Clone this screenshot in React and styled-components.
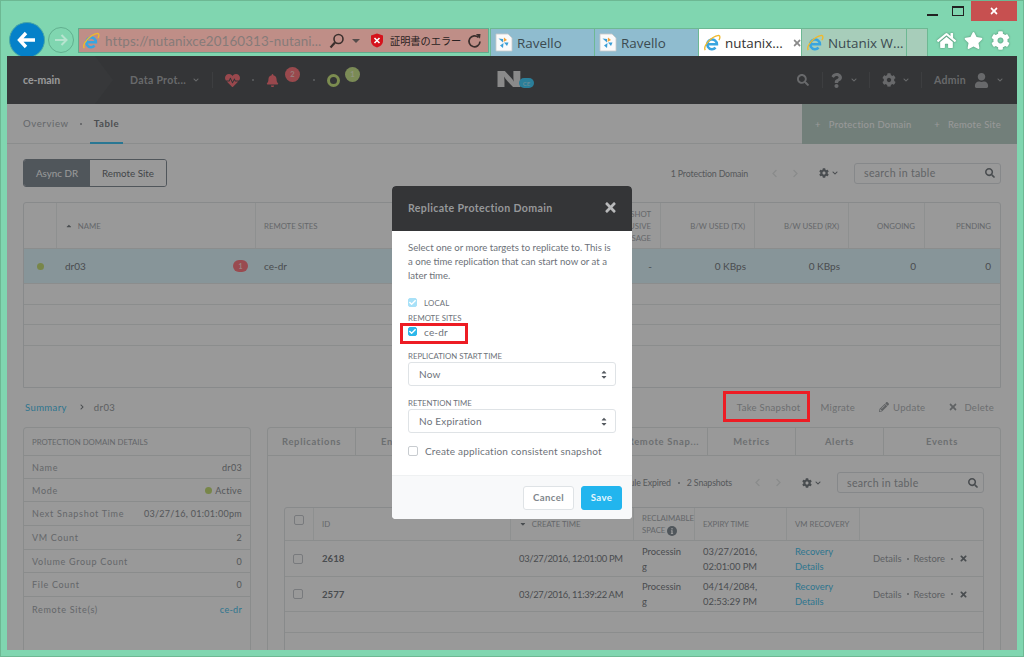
import React from "react"
import styled, { createGlobalStyle } from "styled-components"
import {
  FaHome,
  FaStar,
  FaCog,
  FaHeartbeat,
  FaBell,
  FaSearch,
  FaQuestion,
  FaUser,
  FaPencilAlt,
  FaTimes,
  FaChevronDown,
  FaChevronLeft,
  FaChevronRight,
  FaInfo,
  FaCheck,
  FaCaretUp,
  FaCaretDown,
} from "react-icons/fa"

const GlobalStyle = createGlobalStyle`
  html, body {
    margin: 0;
    padding: 0;
    background: #80d6b0;
    overflow: hidden;
  }
  * {
    box-sizing: border-box;
  }
`

const Window = styled.div`
  width: 1024px;
  height: 657px;
  display: flex;
  flex-direction: column;
  background: #80d6b0;
  border: 1px solid #6db893;
  padding: 0 6px;
  overflow: hidden;
  font-family: Lato, "Noto Sans", sans-serif;
`

/* browser chrome */
const TitleBar = styled.div`
  height: 20px;
  display: flex;
  justify-content: flex-end;
  align-items: flex-start;
  flex: none;
`

const WinButton = styled.div`
  width: ${(p) => p.$w || 26}px;
  height: 20px;
  display: flex;
  align-items: center;
  justify-content: center;
  background: ${(p) => p.$bg || "transparent"};
  color: #fff;
`

const Minimize = styled.div`
  width: 11px;
  height: 2px;
  background: #222;
  margin-top: 7px;
`

const Maximize = styled.div`
  width: 12px;
  height: 10px;
  border: 1px solid #222;
  border-top-width: 2px;
`

const NavBar = styled.div`
  height: 35px;
  flex: none;
  display: flex;
  align-items: flex-start;
  overflow: hidden;
  padding-left: 2px;
`

const BackButton = styled.div`
  width: 36px;
  height: 36px;
  margin-top: 1px;
  border-radius: 50%;
  background: #0581c9;
  border: 1px solid #4aa7a5;
  display: flex;
  align-items: center;
  justify-content: center;
  flex: none;
`

const ForwardButton = styled.div`
  width: 26px;
  height: 26px;
  margin: 6px 4px 0 3px;
  border-radius: 50%;
  border: 1px solid #62b08f;
  display: flex;
  align-items: center;
  justify-content: center;
  flex: none;
`

const AddressBar = styled.div`
  width: 411px;
  height: 25px;
  margin-top: 7px;
  background: #bf8e87;
  border: 1px solid #62ab8c;
  display: flex;
  align-items: center;
  padding: 0 4px 0 3px;
  flex: none;
`

const UrlText = styled.span`
  font-family: Lato, sans-serif;
  font-size: 13.4px;
  letter-spacing: 0.1px;
  color: #867b79;
  margin-left: 5px;
  width: 224px;
  white-space: nowrap;
  overflow: hidden;
  flex: none;
`

const CertText = styled.span`
  font-family: "Noto Sans CJK JP", sans-serif;
  font-size: 10.2px;
  color: #2a2222;
  margin: 0 6px 0 6px;
  white-space: nowrap;
`

const SmallCaret = styled.span`
  width: 0;
  height: 0;
  margin: 0 10px 0 7px;
  border-left: 4px solid transparent;
  border-right: 4px solid transparent;
  border-top: 4px solid #554c4b;
`

const Tabs = styled.div`
  display: flex;
  height: 28px;
  margin-top: 7px;
  margin-left: 1px;
  flex: none;
`

const BrowserTab = styled.div`
  width: ${(p) => p.$w}px;
  display: flex;
  align-items: center;
  gap: 4px;
  padding-left: 4px;
  background: ${(p) => p.$bg};
  border: 1px solid #6db893;
  border-left-width: ${(p) => (p.$first ? 1 : 0)}px;
  border-bottom: none;
  font-family: "Open Sans", sans-serif;
  font-size: 13.4px;
  color: ${(p) => p.$color || "#3b4a50"};
  white-space: nowrap;
  overflow: hidden;
`

const TabClose = styled(FaTimes)`
  margin-left: 6px;
  color: #8a8a8a;
  font-size: 10px;
`

const BrowserTools = styled.div`
  display: flex;
  gap: 8px;
  margin: 10px 0 0 9px;
  color: #fff;
  font-size: 19px;
  filter: drop-shadow(0 0 1px #4f8b70);
`

/* page behind the dialog */
const Page = styled.div`
  height: 594px;
  width: 1010px;
  flex: none;
  position: relative;
  background: #fff;
  display: flex;
  flex-direction: column;
  overflow: hidden;
`

const AppHeader = styled.div`
  height: 48px;
  flex: none;
  background: #57595c;
  display: flex;
  align-items: center;
  color: #aeb0b3;
  position: relative;
`

const ClusterCrumb = styled.div`
  width: 106px;
  height: 48px;
  padding-left: 16px;
  background: #5c5e61;
  clip-path: polygon(0 0, 88px 0, 106px 24px, 88px 48px, 0 48px);
  display: flex;
  align-items: center;
  font-size: 10.5px;
  font-weight: 700;
  color: #fff;
  flex: none;
`

const HeaderItem = styled.div`
  display: flex;
  align-items: center;
  font-size: 10.5px;
  font-weight: 700;
  letter-spacing: 0.3px;
  margin-left: ${(p) => p.$ml || 0}px;
  gap: ${(p) => p.$gap || 6}px;
  position: relative;
  white-space: nowrap;
`

const RedIcon = styled.span`
  color: #ff7880;
  display: flex;
  font-size: ${(p) => p.$size}px;
`

const Ring = styled.span`
  width: 13px;
  height: 13px;
  border-radius: 50%;
  border: 3px solid #cfea85;
`

const Dot = styled.span`
  width: 2px;
  height: 2px;
  border-radius: 50%;
  background: ${(p) => p.$color || "#9ca0a3"};
  margin: 0 ${(p) => p.$gap || 0}px 0 ${(p) => p.$left ?? (p.$gap || 0)}px;
  flex: none;
`

const CountBadge = styled.span`
  width: 15px;
  height: 15px;
  border-radius: 50%;
  background: ${(p) => p.$bg};
  color: ${(p) => p.$color};
  font-size: 7.5px;
  font-weight: 700;
  display: flex;
  align-items: center;
  justify-content: center;
  position: absolute;
  top: -7px;
  left: ${(p) => p.$left}px;
`

const LogoWrap = styled.div`
  position: absolute;
  left: 489px;
  top: 15px;
  display: flex;
  width: 41px;
  height: 20px;
`

const LogoN = styled.span`
  font-family: Inter, sans-serif;
  font-weight: 900;
  font-size: 21px;
  line-height: 18px;
  color: #e6e6e6;
  transform: scaleX(1.6);
  transform-origin: left center;
`

const LogoCe = styled.span`
  position: absolute;
  left: 23px;
  top: 7px;
  width: 15px;
  height: 10px;
  border-radius: 5px;
  background: #46d2ff;
  color: #a8e6fa;
  font-size: 6px;
  font-weight: 700;
  display: flex;
  align-items: center;
  justify-content: center;
`

const HeaderRight = styled.div`
  margin-left: auto;
  display: flex;
  align-items: center;
  padding-right: 14px;
`

const HeaderSep = styled.span`
  width: 1px;
  height: 16px;
  background: #66686b;
  margin: 0 ${(p) => p.$right ?? 12}px 0 ${(p) => p.$gap ?? 12}px;
`

const SubNav = styled.div`
  height: 40px;
  flex: none;
  display: flex;
  align-items: stretch;
  border-bottom: 1px solid #e8ecec;
  padding-left: 16px;
`

const SubTab = styled.div`
  display: flex;
  align-items: center;
  font-size: 9.6px;
  font-weight: ${(p) => (p.$active ? 700 : 400)};
  letter-spacing: 0.6px;
  color: ${(p) => (p.$active ? "#7f8488" : "#a8acb0")};
  padding: 0 ${(p) => (p.$active ? 4 : 0)}px;
  margin-bottom: -1px;
  border-bottom: 2px solid ${(p) => (p.$active ? "#45c6f5" : "transparent")};
`

const SubDot = styled.span`
  align-self: center;
  width: 2px;
  height: 2px;
  background: #9a9da0;
  border-radius: 50%;
  margin: 0 8px 0 11px;
`

const ActionBlock = styled.div`
  margin-left: auto;
  width: 215px;
  background: #bed4cb;
  margin-bottom: -1px;
  display: flex;
  align-items: center;
  justify-content: space-between;
  padding: 0 16px 0 13px;
  font-size: 9.4px;
  color: #fff;
  letter-spacing: 0.3px;
`

const Section = styled.div`
  padding: 15px 16px 0;
  display: flex;
  flex-direction: column;
  flex: 1;
  min-height: 0;
`

const Toolbar = styled.div`
  display: flex;
  align-items: center;
  justify-content: space-between;
  height: 28px;
  flex: none;
  margin-bottom: 15px;
`

const Segmented = styled.div`
  display: flex;
  width: 144px;
  height: 28px;
  border: 1px solid #868f98;
  border-radius: 3px;
  overflow: hidden;
`

const Segment = styled.div`
  flex: ${(p) => (p.$active ? "0 0 66px" : 1)};
  display: flex;
  align-items: center;
  justify-content: center;
  background: ${(p) => (p.$active ? "#858f98" : "#fff")};
  color: ${(p) => (p.$active ? "#fff" : "#70757a")};
  font-size: 9.8px;
`

const TableTools = styled.div`
  display: flex;
  align-items: center;
  color: #b0b4b8;
  font-size: 8.8px;
`

const ToolCount = styled.span`
  color: #8f9397;
  white-space: nowrap;
  letter-spacing: -0.15px;
`

const PagerIcons = styled.span`
  display: flex;
  gap: 12px;
  color: #e6e9e9;
  font-size: 9px;
  margin: 0 19px 0 ${(p) => p.$left}px;
`

const GearDrop = styled.span`
  display: flex;
  align-items: center;
  gap: 3px;
  color: #7b8085;
  font-size: 10px;
  margin-right: 16px;
`

const SearchBox = styled.div`
  width: 147px;
  height: 21px;
  border: 1px solid #dfe3e6;
  border-radius: 3px;
  background: #fff;
  display: flex;
  align-items: center;
  justify-content: space-between;
  padding: 0 5px 0 9px;
  font-size: 10.6px;
  letter-spacing: 0.3px;
  color: #a3a7ab;
  svg {
    color: #7b8085;
    font-size: 10px;
  }
`

const DataTable = styled.div`
  border: 1px solid #e3e6e8;
  border-radius: 3px 3px 0 0;
  flex: none;
  height: ${(p) => (p.$h ? `${p.$h}px` : "auto")};
`

const TableRow = styled.div`
  display: grid;
  grid-template-columns: ${(p) => p.$cols};
  height: ${(p) => p.$h}px;
  background: ${(p) => p.$bg || "transparent"};
  border-bottom: 1px solid #e8ebec;
  &:last-child {
    border-bottom: none;
  }
`

const HeadCell = styled.div`
  display: flex;
  align-items: center;
  justify-content: ${(p) => (p.$right ? "flex-end" : "flex-start")};
  text-align: ${(p) => (p.$right ? "right" : "left")};
  padding: 0 ${(p) => (p.$right ? 9 : 8)}px;
  font-size: 7.8px;
  line-height: 12px;
  color: #a8acb0;
  border-right: 1px solid #edf0f1;
  gap: 5px;
  &:last-child {
    border-right: none;
  }
`

const CheckHead = styled(HeadCell)`
  padding: 7px 0 0 9px;
  align-items: flex-start;
`

const SortCaret = styled.span`
  display: flex;
  color: #7b8085;
`

const Cell = styled.div`
  display: flex;
  align-items: center;
  justify-content: ${(p) => (p.$right ? "flex-end" : p.$center ? "center" : "flex-start")};
  padding: 0 ${(p) => (p.$right ? 9 : 8)}px;
  font-size: ${(p) => p.$size || 10}px;
  font-weight: ${(p) => p.$weight || 400};
  line-height: 15px;
  color: #7b8085;
`

const DateCell = styled(Cell)`
  letter-spacing: -0.3px;
  white-space: nowrap;
`

const WrapCell = styled(Cell)`
  word-break: break-all;
  padding-right: 10px;
`

const ActionsCell = styled(Cell)`
  padding-left: 13px;
`

const Status = styled.span`
  width: 7px;
  height: 7px;
  border-radius: 50%;
  background: #c8e07a;
  flex: none;
`

const AlertPill = styled.span`
  width: 15px;
  height: 12px;
  border-radius: 6px;
  background: #ff7d85;
  color: #ffdcdc;
  font-size: 7px;
  font-weight: 700;
  margin-left: auto;
  display: flex;
  align-items: center;
  justify-content: center;
`

const DetailBar = styled.div`
  height: 28px;
  flex: none;
  margin: 5px 0 6px;
  display: flex;
  align-items: center;
  font-size: 9.5px;
  letter-spacing: 0.4px;
  color: #9a9ea2;
`

const Crumb = styled.span`
  color: ${(p) => p.$color || "inherit"};
  margin-left: ${(p) => p.$ml || 0}px;
  display: flex;
  svg {
    font-size: 6px;
  }
`

const DetailActions = styled.div`
  margin-left: auto;
  display: flex;
  align-items: center;
  padding-right: 7px;
  color: #b5b8bb;
  letter-spacing: 0.3px;
`

const DetailAction = styled.span`
  display: flex;
  align-items: center;
  gap: ${(p) => p.$gap || 0}px;
  margin-left: ${(p) => p.$ml || 0}px;
  svg {
    color: #a0a4a7;
    font-size: 10px;
  }
`

const Panels = styled.div`
  display: flex;
  gap: 16px;
  flex: 1;
  min-height: 0;
`

const Panel = styled.div`
  width: ${(p) => p.$w}px;
  flex: none;
  border: 1px solid #e6e9ea;
  border-bottom: none;
  border-radius: 4px 4px 0 0;
  height: 240px;
`

const PanelTitle = styled.div`
  height: 28px;
  display: flex;
  align-items: center;
  padding: 0 8px;
  font-size: 7.8px;
  color: #a8acb0;
  border-bottom: 1px solid #e6e9ea;
`

const DetailRow = styled.div`
  height: ${(p) => p.$h}px;
  display: flex;
  align-items: center;
  justify-content: space-between;
  padding: 0 8px;
  font-size: 9px;
  letter-spacing: 0.7px;
  color: #a8acb0;
  border-bottom: 1px solid #e6e9ea;
  &:last-child {
    border-bottom: none;
  }
`

const DetailValue = styled.span`
  color: ${(p) => p.$color || "#8d9195"};
  display: flex;
  align-items: center;
  gap: 3px;
  letter-spacing: 0.3px;
`

const PanelTabs = styled.div`
  display: flex;
  height: 28px;
  border-bottom: 1px solid #e6e9ea;
`

const PanelTab = styled.div`
  width: ${(p) => p.$w || 88}px;
  flex: none;
  display: flex;
  align-items: center;
  justify-content: center;
  font-size: 9.4px;
  font-weight: 700;
  letter-spacing: 0.7px;
  color: #b5b9bc;
  border-right: 1px solid #e6e9ea;
  white-space: nowrap;
  &:last-child {
    border-right: none;
  }
`

const PanelBody = styled.div`
  padding: 16px 16px 0;
`

const SnapshotTools = styled.div`
  display: flex;
  justify-content: flex-end;
  height: 21px;
  margin-bottom: 14px;
`

const Square = styled.span`
  width: ${(p) => p.$size || 10}px;
  height: ${(p) => p.$size || 10}px;
  border: 1px solid ${(p) => p.$line || "#c8ccd0"};
  border-radius: 2px;
  background: ${(p) => p.$bg || "#fff"};
  display: flex;
  align-items: center;
  justify-content: center;
  color: #fff;
  font-size: 7px;
  flex: none;
`

const InfoMark = styled.span`
  width: 10px;
  height: 10px;
  border-radius: 50%;
  background: #858f98;
  color: #fff;
  font-size: 6px;
  display: inline-flex;
  align-items: center;
  justify-content: center;
  vertical-align: -1px;
`

const CellLink = styled.span`
  color: #4ec5ef;
`

const RowActions = styled.span`
  display: flex;
  align-items: center;
  font-size: 9.4px;
  color: #9ea2a6;
  white-space: nowrap;
  svg {
    color: #7b8085;
    font-size: 9px;
  }
`

/* dialog */
const Overlay = styled.div`
  position: absolute;
  inset: 0;
  background: rgba(0, 0, 0, 0.4);
  display: flex;
  justify-content: center;
  padding-top: 130px;
`

const Modal = styled.div`
  width: 240px;
  height: 333px;
  background: #fff;
  border-radius: 4px;
  overflow: hidden;
  display: flex;
  flex-direction: column;
  position: relative;
`

const ModalHeader = styled.div`
  height: 45px;
  flex: none;
  background: #343537;
  display: flex;
  align-items: center;
  justify-content: space-between;
  padding: 0 14px 2px 16px;
  font-size: 10.6px;
  font-weight: 700;
  letter-spacing: 0.35px;
  color: #96989a;
  svg {
    color: #b8b9ba;
    font-size: 15px;
  }
`

const ModalBody = styled.div`
  flex: 1;
  padding: 10px 16px 0;
`

const Intro = styled.p`
  margin: 0;
  font-size: 9.6px;
  line-height: 14px;
  color: #6d7279;
  height: 54px;
`

const CheckRow = styled.div`
  display: flex;
  align-items: center;
  gap: 7px;
  height: 11px;
  margin-top: ${(p) => p.$mt || 0}px;
  font-size: ${(p) => p.$size || 10}px;
  letter-spacing: 0.2px;
  color: #6d7279;
`

const FieldLabel = styled.div`
  font-size: 7.8px;
  line-height: 10px;
  color: #6d7279;
  margin: ${(p) => p.$m || "0"};
`

const SelectBox = styled.div`
  height: 24px;
  width: 208px;
  border: 1px solid #dfe3e6;
  border-radius: 3px;
  margin-top: 1px;
  display: flex;
  align-items: center;
  justify-content: space-between;
  padding: 0 7px 0 10px;
  font-size: 10px;
  letter-spacing: 0.2px;
  color: #6d7279;
`

const SelectArrows = styled.span`
  display: flex;
  flex-direction: column;
  font-size: 8px;
  line-height: 0;
  color: #555a60;
  svg {
    margin: -1.5px 0;
  }
`

const ModalFooter = styled.div`
  height: 44px;
  flex: none;
  background: #f8f9fa;
  border-top: 1px solid #eff1f2;
  display: flex;
  justify-content: flex-end;
  align-items: center;
  gap: 7px;
  padding: 0 10px;
`

const FooterButton = styled.div`
  height: 24px;
  width: ${(p) => p.$w}px;
  border-radius: 3px;
  border: 1px solid ${(p) => (p.$primary ? "#22b5ee" : "#dfe3e6")};
  background: ${(p) => (p.$primary ? "#22b5ee" : "#fff")};
  color: ${(p) => (p.$primary ? "#e6f7fe" : "#81868c")};
  font-size: 9.6px;
  font-weight: 700;
  letter-spacing: 0.4px;
  display: flex;
  align-items: center;
  justify-content: center;
`

const RedMark = styled.div`
  position: absolute;
  left: ${(p) => p.$x}px;
  top: ${(p) => p.$y}px;
  width: ${(p) => p.$w}px;
  height: ${(p) => p.$h}px;
  border: 3px solid #ed1c24;
`

const IeIcon = () => (
  <svg width="18" height="18" viewBox="0 0 20 20" style={{ flex: "none" }}>
    <path
      d="M5 11.500h10.500A5.400 5.400 0 1 0 14 15.200"
      fill="none"
      stroke="#39a5e0"
      strokeWidth="2.800"
    />
    <path
      d="M2.500 18C0 14 8 3 17.500 1.500c1.800.5 1.500 3 .2 5.500"
      fill="none"
      stroke="#f0b92c"
      strokeWidth="1.500"
    />
  </svg>
)

const RavelloIcon = () => (
  <svg width="18" height="19" viewBox="0 0 18 19" style={{ flex: "none" }}>
    <path d="M1 1h12l4 4v13H1z" fill="#fbfbfb" stroke="#c9c9c9" strokeWidth="0.800" />
    <path d="M8 9.500 3.500 5.500l4.500.5z" fill="#3b9ed6" />
    <path d="M8.500 9 9 4.500l3 2.500z" fill="#f0a23a" />
    <path d="M9 9.500l4.500 0-1.500 3.500z" fill="#3b9ed6" />
    <path d="M8.500 10l-.5 5-3-2.500z" fill="#3b9ed6" />
  </svg>
)

const BrowserLens = () => (
  <svg width="16" height="16" viewBox="0 0 16 16" style={{ flex: "none" }}>
    <circle cx="9.500" cy="6" r="4.500" fill="none" stroke="#3b2f2d" strokeWidth="1.600" />
    <path d="M6 9.500 1.500 14.500" stroke="#3b2f2d" strokeWidth="2.200" />
  </svg>
)

const CertShield = () => (
  <svg width="14" height="15" viewBox="0 0 14 15" style={{ flex: "none" }}>
    <path d="M7 .5 13 2.500V8c0 3.500-3 5.500-6 6.500C4 13.500 1 11.500 1 8V2.500z" fill="#d5121c" />
    <path d="M4.500 5 9.500 10M9.500 5 4.500 10" stroke="#fff" strokeWidth="1.600" />
  </svg>
)

const RefreshIcon = () => (
  <svg width="15" height="16" viewBox="0 0 15 16" style={{ flex: "none" }}>
    <path d="M11.500 4.500A5.500 5.500 0 1 0 13 8.500" fill="none" stroke="#3b2f2d" strokeWidth="1.700" />
    <path d="M9 1 13.500 1 13 5.800z" fill="#3b2f2d" />
  </svg>
)

const TopCols = "33px 199px 325px 80px 94px 94px 76px 75px"
const SnapCols = "29px 197px 123px 61px 92px 73px 123px"

const details = [
  ["Name", "dr03", 23],
  ["Mode", "Active", 23],
  ["Next Snapshot Time", "03/27/16, 01:01:00pm", 24],
  ["VM Count", "2", 24],
  ["Volume Group Count", "0", 23],
  ["File Count", "0", 24],
  ["Remote Site(s)", "ce-dr", 24],
]

const snapshots = [
  ["2618", "03/27/2016, 12:01:00 PM", "03/27/2016, 02:01:00 PM", 36],
  ["2577", "03/27/2016, 11:39:22 AM", "04/14/2084, 02:53:29 PM", 35],
]

const ChevDown = () => <FaChevronDown style={{ fontSize: 6, flex: "none" }} />

const SearchTools = () => (
  <>
    <GearDrop>
      <FaCog />
      <ChevDown />
    </GearDrop>
    <SearchBox>
      search in table
      <FaSearch />
    </SearchBox>
  </>
)

const App = () => {
  return (
    <Window>
      <GlobalStyle />
      <TitleBar>
        <WinButton>
          <Minimize />
        </WinButton>
        <WinButton>
          <Maximize />
        </WinButton>
        <WinButton $w={46} $bg="#c75050">
          <FaTimes style={{ fontSize: 10 }} />
        </WinButton>
      </TitleBar>

      <NavBar>
        <BackButton>
          <svg width="20" height="18" viewBox="0 0 20 18">
            <path d="M9 2 2.500 9 9 16M3 9h15" fill="none" stroke="#fff" strokeWidth="3.400" />
          </svg>
        </BackButton>
        <ForwardButton>
          <svg width="14" height="12" viewBox="0 0 14 12">
            <path d="M7.500 1 12.500 6 7.500 11M12 6H1" fill="none" stroke="#b6e4cf" strokeWidth="2" />
          </svg>
        </ForwardButton>
        <AddressBar>
          <IeIcon />
          <UrlText>https://nutanixce20160313-nutani...</UrlText>
          <BrowserLens />
          <SmallCaret />
          <CertShield />
          <CertText>証明書のエラー</CertText>
          <RefreshIcon />
        </AddressBar>
        <Tabs>
          <BrowserTab $w={105} $bg="#8fbccf" $first>
            <RavelloIcon />
            Ravello
          </BrowserTab>
          <BrowserTab $w={104} $bg="#8fbccf">
            <RavelloIcon />
            Ravello
          </BrowserTab>
          <BrowserTab $w={103} $bg="#fff" $color="#333">
            <IeIcon />
            nutanix...
            <TabClose />
          </BrowserTab>
          <BrowserTab $w={105} $bg="#a7cdba">
            <IeIcon />
            Nutanix W...
          </BrowserTab>
          <BrowserTab $w={21} $bg="#a7cdba" />
        </Tabs>
        <BrowserTools>
          <FaHome />
          <FaStar />
          <FaCog />
        </BrowserTools>
      </NavBar>

      <Page>
        <AppHeader>
          <ClusterCrumb>ce-main</ClusterCrumb>
          <HeaderItem $ml={17} $gap={7}>
            Data Prot...
            <ChevDown />
          </HeaderItem>
          <HeaderSep $gap={13} />
          <RedIcon $size={15}>
            <FaHeartbeat />
          </RedIcon>
          <Dot $gap={12} />
          <HeaderItem>
            <RedIcon $size={13}>
              <FaBell />
            </RedIcon>
            <CountBadge $left={19} $bg="#ff7b80" $color="#ffd0d2">
              2
            </CountBadge>
          </HeaderItem>
          <Dot $left={34} $gap={12} />
          <HeaderItem>
            <Ring />
            <CountBadge $left={18} $bg="#cde890" $color="#eef8d5">
              1
            </CountBadge>
          </HeaderItem>
          <LogoWrap>
            <LogoN>N</LogoN>
            <LogoCe>CE</LogoCe>
          </LogoWrap>
          <HeaderRight>
            <FaSearch style={{ fontSize: 12 }} />
            <HeaderSep $gap={13} $right={6} />
            <FaQuestion style={{ fontSize: 15, marginRight: 7 }} />
            <ChevDown />
            <HeaderSep />
            <FaCog style={{ fontSize: 14, marginRight: 7 }} />
            <ChevDown />
            <HeaderSep />
            <HeaderItem $gap={8}>
              Admin
              <FaUser style={{ fontSize: 15 }} />
              <ChevDown />
            </HeaderItem>
          </HeaderRight>
        </AppHeader>

        <SubNav>
          <SubTab>Overview</SubTab>
          <SubDot />
          <SubTab $active>Table</SubTab>
          <ActionBlock>
            <span>+ &nbsp;&nbsp;Protection Domain</span>
            <span>+ &nbsp;&nbsp;Remote Site</span>
          </ActionBlock>
        </SubNav>

        <Section>
          <Toolbar>
            <Segmented>
              <Segment $active>Async DR</Segment>
              <Segment>Remote Site</Segment>
            </Segmented>
            <TableTools>
              <ToolCount>1 Protection Domain</ToolCount>
              <PagerIcons $left={22}>
                <FaChevronLeft />
                <FaChevronRight />
              </PagerIcons>
              <SearchTools />
            </TableTools>
          </Toolbar>

          <DataTable $h={186}>
            <TableRow $cols={TopCols} $h={46}>
              <HeadCell />
              <HeadCell>
                <SortCaret>
                  <FaCaretUp />
                </SortCaret>
                NAME
              </HeadCell>
              <HeadCell>REMOTE SITES</HeadCell>
              <HeadCell $right>SNAPSHOT EXCLUSIVE USAGE</HeadCell>
              <HeadCell $right>B/W USED (TX)</HeadCell>
              <HeadCell $right>B/W USED (RX)</HeadCell>
              <HeadCell $right>ONGOING</HeadCell>
              <HeadCell $right>PENDING</HeadCell>
            </TableRow>
            <TableRow $cols={TopCols} $h={35} $bg="#e2f8ff">
              <Cell $center>
                <Status />
              </Cell>
              <Cell>
                dr03
                <AlertPill>1</AlertPill>
              </Cell>
              <Cell>ce-dr</Cell>
              <Cell $right>-</Cell>
              <Cell $right>0 KBps</Cell>
              <Cell $right>0 KBps</Cell>
              <Cell $right>0</Cell>
              <Cell $right>0</Cell>
            </TableRow>
            {[21, 20, 21, 21].map((h, i) => (
              <TableRow key={i} $cols={TopCols} $h={h} />
            ))}
          </DataTable>

          <DetailBar>
            <Crumb $color="#4ec5ef" $ml={2}>
              Summary
            </Crumb>
            <Crumb $ml={12} $color="#7b8085">
              <FaChevronRight />
            </Crumb>
            <Crumb $ml={9}>dr03</Crumb>
            <DetailActions>
              <DetailAction>Take Snapshot</DetailAction>
              <DetailAction $ml={20}>Migrate</DetailAction>
              <DetailAction $ml={24} $gap={4}>
                <FaPencilAlt />
                Update
              </DetailAction>
              <DetailAction $ml={23} $gap={6}>
                <FaTimes />
                Delete
              </DetailAction>
            </DetailActions>
          </DetailBar>

          <Panels>
            <Panel $w={228}>
              <PanelTitle>PROTECTION DOMAIN DETAILS</PanelTitle>
              {details.map(([label, value, h]) => (
                <DetailRow key={label} $h={h}>
                  {label}
                  <DetailValue $color={label === "Remote Site(s)" ? "#4ec5ef" : undefined}>
                    {label === "Mode" && <Status />}
                    {value}
                  </DetailValue>
                </DetailRow>
              ))}
            </Panel>
            <Panel $w={734}>
              <PanelTabs>
                <PanelTab>Replications</PanelTab>
                <PanelTab>Entities</PanelTab>
                <PanelTab />
                <PanelTab />
                <PanelTab>Remote Snap...</PanelTab>
                <PanelTab>Metrics</PanelTab>
                <PanelTab>Alerts</PanelTab>
                <PanelTab $w={116}>Events</PanelTab>
              </PanelTabs>
              <PanelBody>
                <SnapshotTools>
                  <TableTools>
                    <ToolCount>Schedule Expired</ToolCount>
                    <Dot $gap={7} />
                    <ToolCount>2 Snapshots</ToolCount>
                    <PagerIcons $left={21}>
                      <FaChevronLeft />
                      <FaChevronRight />
                    </PagerIcons>
                    <SearchTools />
                  </TableTools>
                </SnapshotTools>
                <DataTable>
                  <TableRow $cols={SnapCols} $h={33}>
                    <CheckHead>
                      <Square />
                    </CheckHead>
                    <HeadCell>ID</HeadCell>
                    <HeadCell>
                      <SortCaret>
                        <FaCaretDown />
                      </SortCaret>
                      CREATE TIME
                    </HeadCell>
                    <HeadCell style={{ paddingRight: 0 }}>
                      <span>
                        RECLAIMABLE
                        <br />
                        SPACE{" "}
                        <InfoMark>
                          <FaInfo />
                        </InfoMark>
                      </span>
                    </HeadCell>
                    <HeadCell>EXPIRY TIME</HeadCell>
                    <HeadCell>VM RECOVERY</HeadCell>
                    <HeadCell />
                  </TableRow>
                  {snapshots.map(([id, created, expiry, h]) => (
                    <TableRow key={id} $cols={SnapCols} $h={h}>
                      <Cell>
                        <Square />
                      </Cell>
                      <Cell $size={9.6} $weight={700}>
                        {id}
                      </Cell>
                      <DateCell $size={9.4}>{created}</DateCell>
                      <WrapCell $size={9.4}>Processing</WrapCell>
                      <Cell $size={9.4}>{expiry}</Cell>
                      <Cell $size={9.4}>
                        <CellLink>Recovery Details</CellLink>
                      </Cell>
                      <ActionsCell>
                        <RowActions>
                          Details
                          <Dot $left={5} $gap={5} />
                          Restore
                          <Dot $left={6} $gap={6} />
                          <FaTimes />
                        </RowActions>
                      </ActionsCell>
                    </TableRow>
                  ))}
                  <TableRow $cols={SnapCols} $h={21} />
                  <TableRow $cols={SnapCols} $h={21} />
                </DataTable>
              </PanelBody>
            </Panel>
          </Panels>
        </Section>

        <Overlay>
          <Modal>
            <ModalHeader>
              Replicate Protection Domain
              <FaTimes />
            </ModalHeader>
            <ModalBody>
              <Intro>
                Select one or more targets to replicate to. This is a one time replication that can
                start now or at a later time.
              </Intro>
              <CheckRow $size={7.8} $mt={2}>
                <Square $size={9} $bg="#a8e1f8" $line="#a8e1f8">
                  <FaCheck />
                </Square>
                LOCAL
              </CheckRow>
              <FieldLabel $m="5px 0 3px">REMOTE SITES</FieldLabel>
              <CheckRow>
                <Square $size={9} $bg="#2cb7ea" $line="#2cb7ea">
                  <FaCheck />
                </Square>
                ce-dr
              </CheckRow>
              <FieldLabel $m="14px 0 0">REPLICATION START TIME</FieldLabel>
              <SelectBox>
                Now
                <SelectArrows>
                  <FaCaretUp />
                  <FaCaretDown />
                </SelectArrows>
              </SelectBox>
              <FieldLabel $m="12px 0 0">RETENTION TIME</FieldLabel>
              <SelectBox>
                No Expiration
                <SelectArrows>
                  <FaCaretUp />
                  <FaCaretDown />
                </SelectArrows>
              </SelectBox>
              <CheckRow $mt={12}>
                <Square />
                Create application consistent snapshot
              </CheckRow>
            </ModalBody>
            <ModalFooter>
              <FooterButton $w={51}>Cancel</FooterButton>
              <FooterButton $w={41} $primary>
                Save
              </FooterButton>
            </ModalFooter>
            <RedMark $x={8} $y={137} $w={68} $h={21} />
          </Modal>
        </Overlay>
        <RedMark $x={716} $y={335} $w={87} $h={31} />
      </Page>
    </Window>
  )
}

export default App
